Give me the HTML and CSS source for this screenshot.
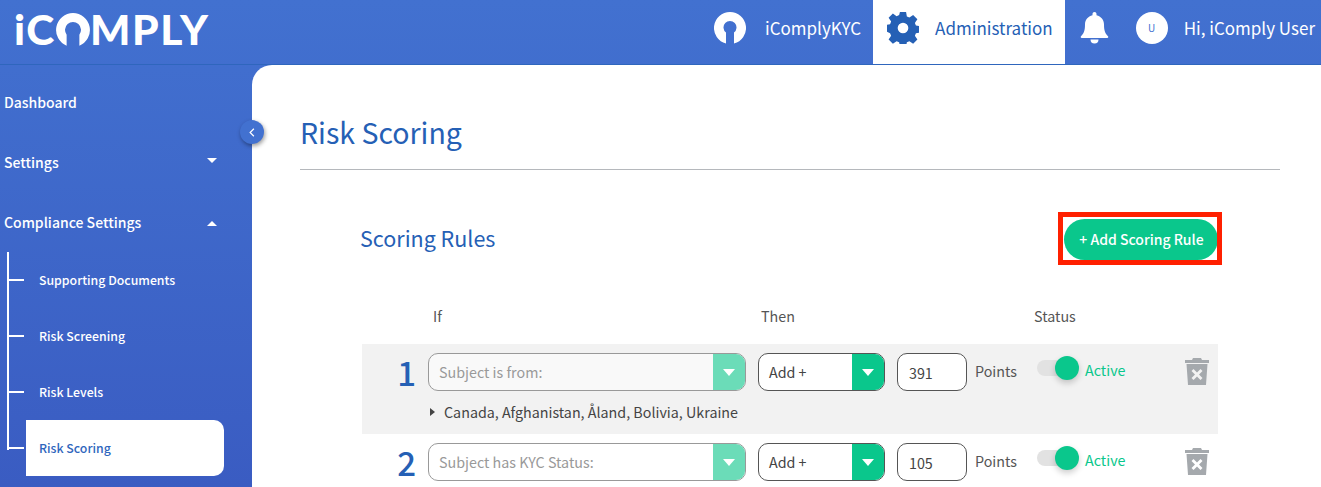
FILE: index.html
```html
<!DOCTYPE html>
<html lang="en">
<head>
<meta charset="utf-8">
<title>Risk Scoring</title>
<link rel="stylesheet" href="styles.css">
</head>
<body>
<header class="topbar">
  <div class="logo"><span>iC</span><svg class="logo-o" viewBox="0 0 32 32"><path fill="#fff" fill-rule="evenodd" d="M16 0a16 16 0 0 1 6 30.800V20.500a7.500 7.500 0 1 0-12 0v10.300A16 16 0 0 1 16 0z"/></svg><span>MPLY</span></div>
  <nav class="topnav">
    <a class="tab"><svg class="tab-icon" viewBox="0 0 32 32"><path fill="#fff" d="M16 0a16 16 0 0 1 4 31.500V20.500a6.500 6.500 0 1 0-8 0v11A16 16 0 0 1 16 0z"/></svg><span class="tab-label">iComplyKYC</span></a>
    <a class="tab tab-active"><svg class="tab-icon" viewBox="0 0 24 24"><path fill="#2560b5" d="M9.700 0h4.600l.6 3.300 1.900.8 2.800-1.900 3.200 3.200-1.900 2.800.8 1.900 3.300.6v4.600l-3.300.6-.8 1.900 1.900 2.800-3.200 3.200-2.800-1.900-1.900.8-.6 3.300H9.700l-.6-3.300-1.900-.8-2.800 1.900-3.200-3.200 1.900-2.800-.8-1.900L-1 14.300V9.700l3.300-.6.8-1.900-1.900-2.800 3.200-3.200 2.800 1.900 1.900-.8zM12 8a4 4 0 1 0 0 8 4 4 0 0 0 0-8z"/></svg><span class="tab-label">Administration</span></a>
    <svg class="bell" viewBox="0 0 28 32"><path fill="#fff" d="M14 0c1.200 0 2 .9 2 2v1.200c4.500 1 7.500 4.600 7.500 9.300 0 7 1.500 9.200 4 11.700.5.600.5 1.800-.8 1.800H1.300C0 26-.1 24.800.5 24.200c2.500-2.500 4-4.700 4-11.700C4.500 7.800 7.500 4.200 12 3.200V2c0-1.100.8-2 2-2zM10 27.500h8a4 4 0 0 1-8 0z"/></svg>
    <span class="avatar">U</span>
    <span class="greeting">Hi, iComply User</span>
  </nav>
</header>
<div class="shell">
  <aside class="sidebar">
    <a class="side-item">Dashboard</a>
    <a class="side-item">Settings<i class="caret caret-down"></i></a>
    <a class="side-item">Compliance Settings<i class="caret caret-up"></i></a>
    <ul class="sub-list">
      <li class="sub-item">Supporting Documents</li>
      <li class="sub-item">Risk Screening</li>
      <li class="sub-item">Risk Levels</li>
      <li class="sub-item sub-active">Risk Scoring</li>
    </ul>
  </aside>
  <button class="collapse" aria-label="Collapse"><svg viewBox="0 0 8 12" width="6" height="9"><path d="M6.500 1 1.500 6l5 5" fill="none" stroke="#fff" stroke-width="1.600"/></svg></button>
  <main class="content">
    <h1 class="page-title">Risk Scoring</h1>
    <section class="rules">
      <div class="rules-head">
        <h2 class="rules-title">Scoring Rules</h2>
        <div class="add-wrap"><button class="add-btn">+ Add Scoring Rule</button><span class="highlight"></span></div>
      </div>
      <div class="col-heads">
        <span class="col-if">If</span><span class="col-then">Then</span><span class="col-status">Status</span>
      </div>
      <div class="rule rule-shaded">
        <div class="rule-main">
          <span class="rule-num">1</span>
          <div class="select select-muted select-wide select-fill"><span class="select-text">Subject is from:</span><span class="select-arrow"></span></div>
          <div class="select select-add"><span class="select-text">Add +</span><span class="select-arrow"></span></div>
          <div class="points-input">391</div>
          <span class="points">Points</span>
          <div class="toggle"><span class="knob"></span></div>
          <span class="active">Active</span>
          <svg class="trash" viewBox="0 0 24 27"><path fill="#a5a9ad" d="M8 0h8l1 2h7v3H0V2h7zM1.500 6h21l-1.500 21H3zM8.500 11 6.500 13l3.500 3.500L6.500 20l2 2 3.500-3.500 3.500 3.500 2-2-3.500-3.500 3.500-3.500-2-2-3.500 3.500z"/></svg>
        </div>
        <div class="rule-detail"><i class="tri"></i>Canada, Afghanistan, Åland, Bolivia, Ukraine</div>
      </div>
      <div class="rule">
        <div class="rule-main">
          <span class="rule-num">2</span>
          <div class="select select-muted select-wide"><span class="select-text">Subject has KYC Status:</span><span class="select-arrow"></span></div>
          <div class="select select-add"><span class="select-text">Add +</span><span class="select-arrow"></span></div>
          <div class="points-input">105</div>
          <span class="points">Points</span>
          <div class="toggle"><span class="knob"></span></div>
          <span class="active">Active</span>
          <svg class="trash" viewBox="0 0 24 27"><path fill="#a5a9ad" d="M8 0h8l1 2h7v3H0V2h7zM1.500 6h21l-1.500 21H3zM8.500 11 6.500 13l3.500 3.500L6.500 20l2 2 3.500-3.500 3.500 3.500 2-2-3.500-3.500 3.500-3.500-2-2-3.500 3.500z"/></svg>
        </div>
      </div>
    </section>
  </main>
</div>
</body>
</html>
```

FILE: styles.css
```css
* { box-sizing: border-box; }
html, body { margin: 0; height: 487px; overflow: hidden; }
body {
  font-family: "Noto Sans CJK SC", "Noto Sans", sans-serif;
  background: linear-gradient(180deg, #4271d0 0%, #3a5cc2 100%);
  color: #fff;
  display: flex;
  flex-direction: column;
}
.topbar {
  height: 65px;
  flex: none;
  display: flex;
  justify-content: space-between;
  border-bottom: 1px solid #2f66bd;
}
.logo {
  display: flex;
  align-items: center;
  padding: 0 0 6px 14px;
  font-family: "Lato", sans-serif;
  font-weight: 900;
  font-size: 42.500px;
  letter-spacing: 1.600px;
  line-height: 1;
}
.logo-o { width: 34px; height: 34px; margin: 1px 0 0 0; }
.topnav { display: flex; align-items: center; padding: 0 6px 0 0; }
.tab { height: 64px; display: flex; align-items: center; padding: 0 12px 8px 14px; }
.tab-icon { width: 32px; height: 32px; flex: none; }
.tab-label { font-size: 17px; line-height: 24px; margin-left: 19px; }
.tab-active { background: #fff; color: #2560b5; }
.tab-active .tab-label { margin-left: 16px; }
.bell { width: 29px; height: 32px; margin: 0 0 8px 15px; }
.avatar {
  width: 32px; height: 32px; border-radius: 50%;
  background: #fff; color: #4271d0;
  font-size: 10px; line-height: 32px; text-align: center;
  margin: 0 0 8px 27px;
}
.greeting { font-size: 17px; line-height: 24px; margin: 0 0 8px 16px; }
.shell { flex: 1; display: flex; position: relative; min-height: 0; }
.sidebar { width: 252px; flex: none; padding-top: 7px; }
.side-item {
  display: flex;
  align-items: center;
  justify-content: space-between;
  height: 60px;
  padding: 0 35px 0 4px;
  font-size: 14px;
  font-weight: 500;
}
.caret { width: 0; height: 0; border-left: 5.500px solid transparent; border-right: 5.500px solid transparent; }
.caret-down { border-top: 5px solid #fff; margin-bottom: 4px; }
.caret-up { border-bottom: 5px solid #fff; margin-top: 2px; }
.sub-list {
  list-style: none;
  margin: 0 0 0 7px;
  padding: 0;
  width: 217px;
  position: relative;
}
.sub-list::before {
  content: "";
  position: absolute;
  left: 0; top: 0;
  width: 2px;
  height: 198px;
  background: #fff;
}
.sub-item {
  height: 56px;
  display: flex;
  align-items: center;
  margin-left: 19px;
  padding: 0 0 0 13px;
  font-size: 12.300px;
  font-weight: 500;
  position: relative;
}
.sub-item::before {
  content: "";
  position: absolute;
  left: -19px; top: 27px;
  width: 17px; height: 2px;
  background: #fff;
}
.sub-active { background: #fff; color: #2f66bd; border-radius: 0 10px 10px 0; }
.collapse {
  position: absolute;
  left: 240px; top: 55px;
  width: 24px; height: 24px;
  padding: 0;
  border: 0;
  border-radius: 50%;
  background: #4271d0;
  box-shadow: 1px 2px 4px rgba(0,0,0,.4);
  display: flex; align-items: center; justify-content: center;
  z-index: 2;
}
.content {
  flex: 1;
  min-width: 0;
  overflow: hidden;
  background: #fff;
  border-top-left-radius: 20px;
  padding: 0 41px 0 48px;
}
.page-title {
  margin: 0;
  height: 105px;
  padding-top: 45px;
  border-bottom: 1px solid #b5b8bc;
  font-size: 28.500px;
  line-height: 44px;
  font-weight: 400;
  color: #2560b5;
}
.rules { padding: 0 62px 0 60px; }
.rules-head {
  display: flex;
  justify-content: space-between;
  align-items: center;
  height: 92px;
  padding-top: 46px;
}
.rules-title { margin: -2px 0 0; font-size: 21.500px; line-height: 30px; font-weight: 400; color: #2560b5; }
.add-wrap { position: relative; width: 154px; height: 41px; }
.add-btn {
  width: 100%; height: 100%;
  border: 0; border-radius: 21px;
  background: #0ac78c;
  color: #fff;
  font: 500 14px/20px "Noto Sans CJK SC", sans-serif;
  padding: 0 0 0 1px;
}
.highlight {
  position: absolute;
  left: -6px; top: -7px;
  width: 164px; height: 53px;
  border: 5px solid #ff2000;
}
.col-heads {
  height: 82px;
  padding: 44px 0 0 73px;
  color: #555;
  font-size: 14.300px;
  line-height: 20px;
  display: flex;
}
.col-if { width: 328px; }
.col-then { width: 273px; }
.rule { margin-left: 2px; padding: 9px 0 0; height: 90px; }
.rule-shaded { background: #f2f2f2; }
.rule-main { display: flex; align-items: flex-start; height: 38px; }
.rule-num {
  width: 53px;
  padding-right: 0;
  transform: translateX(1px);
  text-align: right;
  font-size: 33px;
  line-height: 38px;
  color: #2560b5;
  font-weight: 500;
  flex: none;
}
.select {
  margin-left: 13px;
  height: 38px;
  border: 1px solid #555;
  border-radius: 10px;
  background: #fff;
  display: flex;
  overflow: hidden;
  font-size: 14.300px;
  line-height: 36px;
  color: #444;
}
.select-muted { border-color: #999; color: #999; }
.select-wide { width: 318px; }
.select-fill { background: #f9f9f9; }
.select-add { width: 127px; margin-left: 12px; }
.select-text { flex: 1; padding-left: 10px; }
.select-arrow {
  flex: none;
  width: 32px;
  background: #0ac78c;
  display: flex;
  align-items: center;
  justify-content: center;
}
.select-arrow::after {
  content: "";
  border-left: 6.500px solid transparent;
  border-right: 6.500px solid transparent;
  border-top: 7px solid #fff;
}
.select-muted .select-arrow { background: #6bdcb8; }
.points-input {
  width: 70px; height: 38px;
  margin-left: 12px;
  border: 1px solid #555;
  border-radius: 10px;
  background: #fff;
  padding: 2px 0 0 11px;
  font-size: 14.300px;
  line-height: 34px;
  color: #444;
}
.points { margin-left: 8px; font-size: 14.300px; line-height: 36px; color: #555; width: 62px; flex: none; }
.toggle {
  width: 38px; height: 16px;
  margin-top: 7px;
  border-radius: 8px;
  background: #e2e2e2;
  position: relative;
  flex: none;
}
.knob {
  position: absolute;
  right: -4px; top: -4px;
  width: 24px; height: 24px;
  border-radius: 50%;
  background: #0ac78c;
  box-shadow: 0 3px 6px rgba(0,0,0,.2);
}
.active { margin-left: 10px; font-size: 14.300px; line-height: 34px; color: #0ac78c; width: 100px; flex: none; }
.trash { width: 24px; height: 27px; margin-top: 5px; flex: none; }
.rule-detail {
  display: flex;
  align-items: center;
  margin: 11px 0 0 68px;
  font-size: 14.300px;
  line-height: 20px;
  color: #444;
}
.tri {
  border-top: 4px solid transparent;
  border-bottom: 4px solid transparent;
  border-left: 5px solid #444;
  margin-right: 9px;
}
```
